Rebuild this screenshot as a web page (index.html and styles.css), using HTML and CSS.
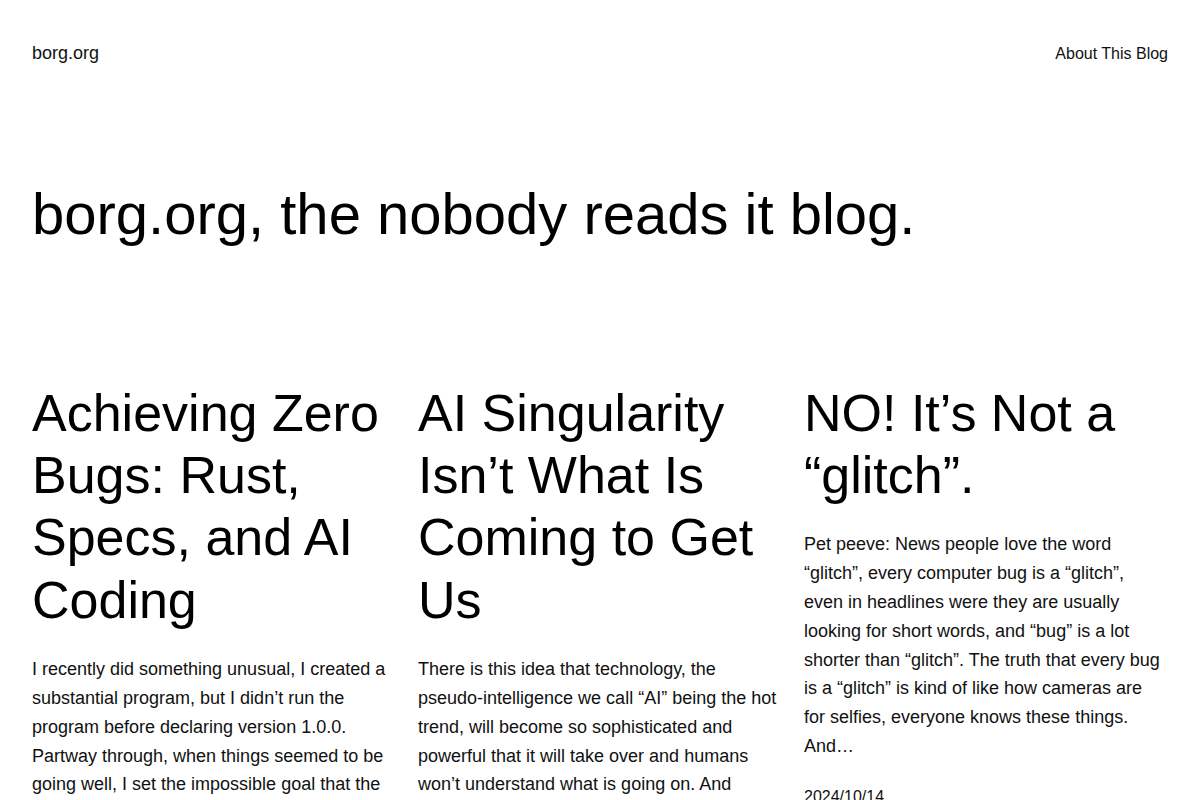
FILE: index.html
```html
<!DOCTYPE html>
<html lang="en">
<head>
<meta charset="utf-8">
<title>borg.org</title>
<link rel="stylesheet" href="styles.css">
</head>
<body>
<header class="site-header">
  <a class="site-title" href="#">borg.org</a>
  <nav class="site-nav"><a href="#">About This Blog</a></nav>
</header>
<main>
  <h1 class="tagline">borg.org, the nobody reads it blog.</h1>
  <section class="posts">
    <article class="post">
      <h2 class="post-title">Achieving Zero Bugs: Rust, Specs, and AI Coding</h2>
      <p class="excerpt">I recently did something unusual, I created a substantial program, but I didn’t run the program before declaring version 1.0.0. Partway through, when things seemed to be going well, I set the impossible goal that the program would have zero bugs. And…</p>
      <div class="date">2024/10/20</div>
    </article>
    <article class="post">
      <h2 class="post-title">AI Singularity Isn’t What Is Coming to Get Us</h2>
      <p class="excerpt">There is this idea that technology, the pseudo-intelligence we call “AI” being the hot trend, will become so sophisticated and powerful that it will take over and humans won’t understand what is going on. And humans will be in serious trouble. I…</p>
      <div class="date">2024/10/17</div>
    </article>
    <article class="post">
      <h2 class="post-title">NO! It’s Not a “glitch”.</h2>
      <p class="excerpt">Pet peeve: News people love the word “glitch”, every computer bug is a “glitch”, even in headlines were they are usually looking for short words, and “bug” is a lot shorter than “glitch”. The truth that every bug is a “glitch” is kind of like how cameras are for selfies, everyone knows these things. And…</p>
      <div class="date">2024/10/14</div>
    </article>
  </section>
</main>
</body>
</html>
```

FILE: styles.css
```css
html, body {
  margin: 0;
  padding: 0;
  background: #ffffff;
}
body {
  font-family: "Liberation Sans", Arial, sans-serif;
  color: #111111;
}
a {
  color: inherit;
  text-decoration: none;
}
.site-header {
  display: flex;
  justify-content: space-between;
  align-items: center;
  padding: 40px 32px;
  height: 27px;
}
.site-title {
  font-size: 18px;
  line-height: 27px;
}
.site-nav {
  font-size: 16px;
  line-height: 27px;
}
main {
  padding: 0 32px;
}
.tagline {
  margin: 72px 0 0;
  font-size: 58px;
  font-weight: 400;
  line-height: 1.2;
  color: #000;
}
.posts {
  display: grid;
  grid-template-columns: repeat(3, 1fr);
  gap: 22px;
  margin-top: 133px;
}
.post-title {
  margin: 0;
  font-size: 52px;
  font-weight: 400;
  line-height: 1.2;
  color: #000;
}
.excerpt {
  margin: 24px 0 0;
  font-size: 18px;
  line-height: 1.6;
}
.date {
  margin-top: 23px;
  font-size: 16px;
  line-height: 1.6;
}
```
